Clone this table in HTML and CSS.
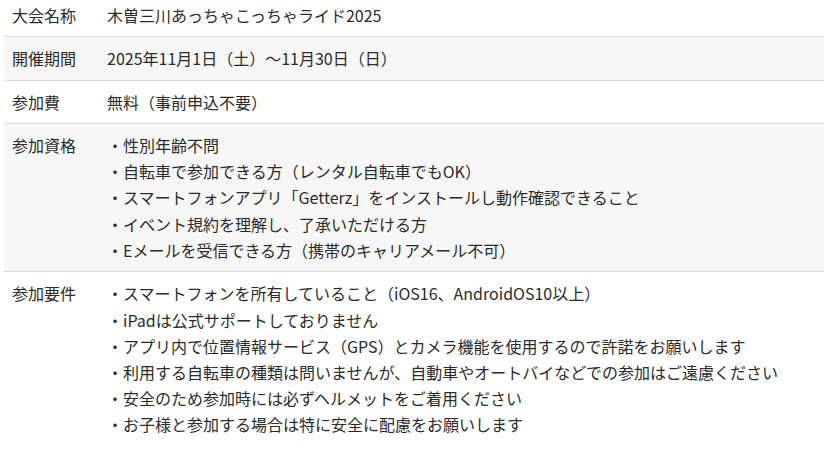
FILE: index.html
```html
<!DOCTYPE html>
<html lang="ja">
<head>
    <meta charset="UTF-8">
    <meta name="viewport" content="width=device-width, initial-scale=1.0">
    <title>大会概要</title>
    <link rel="stylesheet" href="styles.css">
</head>
<body>
    <table class="info-table">
        <tbody>
            <tr>
                <th>大会名称</th>
                <td>木曽三川あっちゃこっちゃライド2025</td>
            </tr>
            <tr>
                <th>開催期間</th>
                <td>2025年11月1日（土）〜11月30日（日）</td>
            </tr>
            <tr>
                <th>参加費</th>
                <td>無料（事前申込不要）</td>
            </tr>
            <tr>
                <th>参加資格</th>
                <td>
                    <ul class="dot-list">
                        <li>性別年齢不問</li>
                        <li>自転車で参加できる方（レンタル自転車でもOK）</li>
                        <li>スマートフォンアプリ「Getterz」をインストールし動作確認できること</li>
                        <li>イベント規約を理解し、了承いただける方</li>
                        <li>Eメールを受信できる方（携帯のキャリアメール不可）</li>
                    </ul>
                </td>
            </tr>
            <tr>
                <th>参加要件</th>
                <td>
                    <ul class="dot-list">
                        <li>スマートフォンを所有していること（iOS16、AndroidOS10以上）</li>
                        <li>iPadは公式サポートしておりません</li>
                        <li>アプリ内で位置情報サービス（GPS）とカメラ機能を使用するので許諾をお願いします</li>
                        <li>利用する自転車の種類は問いませんが、自動車やオートバイなどでの参加はご遠慮ください</li>
                        <li>安全のため参加時には必ずヘルメットをご着用ください</li>
                        <li>お子様と参加する場合は特に安全に配慮をお願いします</li>
                    </ul>
                </td>
            </tr>
        </tbody>
    </table>
</body>
</html>
```

FILE: styles.css
```css
body {
    font-family: "Noto Sans CJK JP", "Noto Sans", sans-serif;
    font-size: 16px;
    line-height: 26.2px;
    color: #2b2b2b;
    margin: 0;
    padding: 0 0 0 4px;
    background-color: #fff;
    overflow: hidden;
}

.info-table {
    width: 830px;
    margin-top: -6.5px;
    border-collapse: collapse;
}

.info-table th,
.info-table td {
    padding: 8px 8px 8.3px;
    border-bottom: 1px solid #dcdcdc;
    text-align: left;
    vertical-align: top;
    font-weight: normal;
}

.info-table tr:last-child th,
.info-table tr:last-child td {
    border-bottom: none;
}

.info-table th {
    width: 79px;
}

.info-table tr:nth-child(even) th,
.info-table tr:nth-child(even) td {
    background-color: #f7f7f7;
}

.dot-list {
    list-style: none;
    margin: 0;
    padding: 0;
}

.dot-list li::before {
    content: "・";
}
```
